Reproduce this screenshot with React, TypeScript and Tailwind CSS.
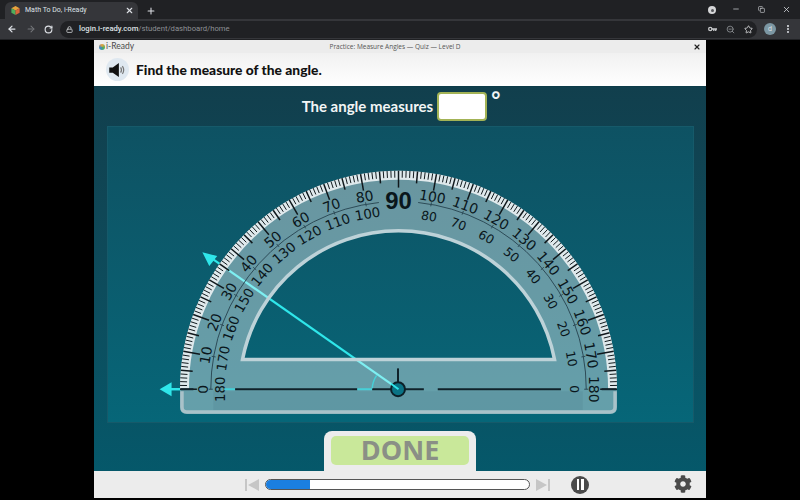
import React from 'react';
import { ArrowLeft, ArrowRight, RotateCw, Lock, ZoomOut, Star, EllipsisVertical, Plus, X, Minus, Copy } from 'lucide-react';
import { FaCog } from 'react-icons/fa';

const CX = 398.5;
const CY = 390;

const polar = (deg: number, r: number) => {
  const rad = (deg * Math.PI) / 180;
  return { x: CX - r * Math.cos(rad), y: CY - r * Math.sin(rad) };
};

const arcPath = (from: number, to: number, r: number) => {
  const a = polar(from, r);
  const b = polar(to, r);
  return `M${a.x} ${a.y}A${r} ${r} 0 0 1 ${b.x} ${b.y}`;
};

const Label: React.FC<{ deg: number; r: number; size: number; value: number }> = ({ deg, r, size, value }) => {
  const p = polar(deg, r);
  return (
    <text
      x={p.x}
      y={p.y}
      fontSize={size}
      fill="#0a161b"
      textAnchor="middle"
      dominantBaseline="central"
      transform={`rotate(${deg - 90} ${p.x} ${p.y})`}
    >
      {value}
    </text>
  );
};

const Protractor = () => {
  const degrees = Array.from({ length: 181 }, (_, i) => i);
  const tens = degrees.filter(d => d % 10 === 0);

  return (
    <svg viewBox="107 126 587 297" className="w-full h-full block font-['DejaVu_Sans',sans-serif]">
      {/* rays sit under the see-through body */}
      <line x1={CX} y1={CY} x2={208} y2={256.5} stroke="#2fe6ea" strokeWidth="2.2" />
      <line x1={179} y1={CY} x2={165} y2={CY} stroke="#2fe6ea" strokeWidth="2.5" />
      <polygon points="201,252 216,256 208,266" fill="#2fe6ea" />
      <polygon points="158,390 170,383 170,397" fill="#2fe6ea" />

      <path
        fillRule="evenodd"
        fill="#ffffff"
        fillOpacity="0.38"
        d={`M${CX - 220} ${CY}A220 220 0 0 1 ${CX + 220} ${CY}L${CX + 220} 408Q${CX + 220} 415 ${CX + 213} 415L${CX - 213} 415Q${CX - 220} 415 ${CX - 220} 408Z
            M${polar(11, 160).x} 360A160 160 0 0 1 ${polar(169, 160).x} 360Z`}
      />
      <rect x={212} y={392} width={372} height={19} fill="#3d6675" fillOpacity="0.12" />

      {/* light rims */}
      <path d={`M${polar(11, 160).x} 360A160 160 0 0 1 ${polar(169, 160).x} 360Z`} fill="none" stroke="#bdd2d8" strokeWidth="3.5" />
      <path d={`M${CX - 218} 392L${CX - 218} 408Q${CX - 218} 413 ${CX - 213} 413L${CX + 213} 413Q${CX + 218} 413 ${CX + 218} 408L${CX + 218} 392`} fill="none" stroke="#a9c2c9" strokeWidth="3.5" />
      <path d={arcPath(0, 180, 215.5)} fill="none" stroke="#dfe9ec" strokeWidth="9" />

      {/* outer ticks */}
      {degrees.map(d => {
        const len = d % 10 === 0 ? 17 : d % 5 === 0 ? 12 : 7;
        const a = polar(d, 220);
        const b = polar(d, 220 - len);
        return (
          <line
            key={d}
            x1={a.x}
            y1={a.y}
            x2={b.x}
            y2={b.y}
            stroke="#10181c"
            strokeWidth={d % 5 === 0 ? 1.5 : 1}
          />
        );
      })}

      {/* inner scale line */}
      <path d={arcPath(0, 84, 189)} fill="none" stroke="#2c4b57" strokeWidth="1" />
      <path d={arcPath(96, 180, 189)} fill="none" stroke="#2c4b57" strokeWidth="1" />
      {tens.filter(d => d !== 90).map(d => {
        const a = polar(d, 187);
        const b = polar(d, 191);
        return <line key={d} x1={a.x} y1={a.y} x2={b.x} y2={b.y} stroke="#2c4b57" strokeWidth="1" />;
      })}

      {tens.filter(d => d !== 90).map(d => (
        <Label key={`o${d}`} deg={d} r={197} size={14} value={d} />
      ))}
      {tens.filter(d => d !== 90).map(d => (
        <Label key={`i${d}`} deg={d} r={d < 90 ? 179 : 177} size={d < 90 ? 13.5 : 12.5} value={180 - d} />
      ))}
      <text x={CX} y={200} fontSize="24" fontWeight="700" fill="#0a161b" textAnchor="middle" dominantBaseline="central" className="font-['Liberation_Sans',sans-serif]">
        90
      </text>

      {/* baseline */}
      <line x1={223} y1={CY} x2={234} y2={CY} stroke="#46d0d8" strokeWidth="2" />
      <line x1={234} y1={CY} x2={357} y2={CY} stroke="#10222a" strokeWidth="2" />
      <line x1={357} y1={CY} x2={372} y2={CY} stroke="#46d0d8" strokeWidth="2" />
      <line x1={372} y1={CY} x2={424} y2={CY} stroke="#10222a" strokeWidth="2" />
      <line x1={438} y1={CY} x2={562} y2={CY} stroke="#10222a" strokeWidth="2" />
      <line x1={179} y1={CY} x2={192} y2={CY} stroke="#10222a" strokeWidth="2" />
      <line x1={603} y1={CY} x2={618} y2={CY} stroke="#10222a" strokeWidth="2" />
      <line x1={398} y1={CY} x2={398} y2={369} stroke="#10222a" strokeWidth="2" />
      <path d="M372 389A26 26 0 0 1 376.5 376" fill="none" stroke="#46d0d8" strokeWidth="1.5" />
      <circle cx={398} cy={CY} r={7} fill="#0a7385" stroke="#0c1f27" strokeWidth="2" />
      <line x1={CX} y1={CY} x2={391} y2={384.5} stroke="#2fe6ea" strokeWidth="2" />
    </svg>
  );
};

const BrowserChrome = () => (
  <div className="h-10 bg-[#202124] text-[#dee1e6] font-['Roboto',sans-serif] shrink-0">
    <div className="h-[19px] flex items-end pl-[5px]">
      <div className="w-[133px] h-[17px] bg-[#35363a] rounded-t-md flex items-center pl-[6px] pr-[4px] gap-[5px]">
        <svg viewBox="0 0 12 12" className="w-[9px] h-[9px] shrink-0">
          <polygon points="6,0 11.5,3 6,6 0.5,3" fill="#e8a33d" />
          <polygon points="0.5,3 6,6 6,12 0.5,9" fill="#4fae5c" />
          <polygon points="11.5,3 6,6 6,12 11.5,9" fill="#d9653b" />
        </svg>
        <span className="text-[7px] flex-1 whitespace-nowrap">Math To Do, i-Ready</span>
        <X className="w-[9px] h-[9px]" strokeWidth={3} />
      </div>
      <Plus className="w-[10px] h-[10px] ml-[8px] mb-[3px]" strokeWidth={2.5} />
      <div className="flex-1" />
      <div className="flex items-center self-start mt-[4px] mr-[9px]">
        <div className="w-[8px] h-[8px] rounded-full bg-[#d5d6d8] flex items-center justify-center mr-[16px] mt-[2px]">
          <div className="w-[3px] h-[3px] rounded-full bg-[#55565a]" />
        </div>
        <Minus className="w-[8px] h-[8px] mr-[18px]" />
        <Copy className="w-[7px] h-[7px] mr-[17px]" />
        <X className="w-[9px] h-[9px]" />
      </div>
    </div>
    <div className="h-[20px] bg-[#35363a] flex items-center pl-[7px]">
      <ArrowLeft className="w-[10px] h-[10px] mr-[9px]" strokeWidth={3} />
      <ArrowRight className="w-[10px] h-[10px] mr-[8px] text-[#75777b]" strokeWidth={2.5} />
      <RotateCw className="w-[9px] h-[9px] mr-[7px]" strokeWidth={3} />
      <div className="w-[697px] h-[17px] rounded-full bg-[#202124] flex items-center pl-[6px] pr-[4px]">
        <Lock className="w-[7px] h-[7px] mr-[6px] text-[#c0c2c5]" strokeWidth={3} />
        <span className="text-[7.7px] font-medium whitespace-nowrap">login.i-ready.com</span>
        <span className="text-[7.7px] text-[#8d9094] whitespace-nowrap">/student/dashboard/home</span>
        <div className="flex-1" />
        <svg viewBox="0 0 14 8" className="w-[9px] h-[6px] mr-[9px]">
          <circle cx="3.5" cy="4" r="2.5" fill="none" stroke="#c6c8ca" strokeWidth="2" />
          <path d="M6 3h8v2h-1v2h-2V5h-1v2H8V5H6z" fill="#c6c8ca" />
        </svg>
        <ZoomOut className="w-[9px] h-[9px] mr-[9px] text-[#9a9da1]" />
        <Star className="w-[9px] h-[9px] text-[#c6c8ca]" strokeWidth={2.5} />
      </div>
      <div className="w-[12px] h-[12px] rounded-full bg-[#7c97a3] text-[7px] flex items-center justify-center ml-[7px] mr-[7px]">d</div>
      <EllipsisVertical className="w-[10px] h-[10px]" strokeWidth={3} />
    </div>
  </div>
);

export default function App() {
  return (
    <div className="w-[800px] h-[500px] bg-black flex flex-col overflow-hidden font-['Lato',sans-serif]">
      <BrowserChrome />
      <div className="w-[612px] h-[458px] ml-[94px] flex flex-col">
        <div className="h-[13px] bg-[#ececec] flex items-center px-[5px] text-[6.5px] text-[#555] shrink-0">
          <span className="w-[6px] h-[6px] rounded-full bg-[conic-gradient(#e8a33d,#4fae5c,#3b87c9,#e8a33d)] mr-[1px]" />
          <span className="text-[8.5px] text-[#4a4a4a]">i-Ready</span>
          <span className="flex-1 text-center pr-[37px] font-['Open_Sans',sans-serif] whitespace-nowrap">Practice: Measure Angles — Quiz — Level D</span>
          <X className="w-[8px] h-[8px] text-[#222]" strokeWidth={3.5} />
        </div>
        <div className="h-[34px] bg-gradient-to-b from-[#f1f1f1] to-white flex items-center pl-[12px] gap-[7px] border-b border-[#0d3c49] shrink-0">
          <div className="w-[23px] h-[23px] rounded-full bg-[#dfe8f0] flex items-center justify-center">
            <svg viewBox="0 0 20 16" className="w-[18px] h-[14px]">
              <polygon points="0,5 4,5 11,0 11,16 4,11 0,11" fill="#111" />
              <path d="M13 5Q15 8 13 11M15 3.5Q18 8 15 12.5" fill="none" stroke="#777" strokeWidth="1.4" />
            </svg>
          </div>
          <span className="text-[13.8px] font-black text-[#111] mt-[1px]">Find the measure of the angle.</span>
        </div>
        <div className="flex-1 bg-gradient-to-b from-[#113f4d] to-[#05586a] flex flex-col items-center">
          <div className="h-[39px] flex items-center gap-[4px] pl-[2px] shrink-0">
            <span className="text-[15px] font-bold text-[#f2f5f5]">The angle measures</span>
            <div className="w-[50px] h-[29px] bg-white border-2 border-[#a3b356] rounded-[4px]" />
            <span className="text-[22px] leading-[22px] font-bold text-[#f2f5f5] self-start mt-[2px]">°</span>
          </div>
          <div className="w-[587px] h-[297px] bg-gradient-to-b from-[#0e5263] to-[#066678] border border-[#165a6a] shrink-0">
            <Protractor />
          </div>
          <div className="flex-1 flex items-end">
            <div className="w-[152px] h-[40px] bg-[#ececec] rounded-t-[8px] px-[7px] pt-[5px]">
              <div className="h-[29px] bg-[#c9e89a] rounded-[5px] flex items-center justify-center text-[27px] font-bold text-[#8a8f86] font-['Open_Sans',sans-serif]">
                DONE
              </div>
            </div>
          </div>
        </div>
        <div className="h-[27px] bg-[#ececec] flex items-center pl-[151px] shrink-0">
          <svg viewBox="0 0 14 14" className="w-[14px] h-[14px] mr-[6px]">
            <rect x="0" y="1" width="2" height="12" fill="#c6c6c6" />
            <polygon points="14,1 14,13 3,7" fill="#c6c6c6" />
          </svg>
          <div className="w-[265px] h-[11px] rounded-full bg-white border border-[#555] overflow-hidden">
            <div className="w-[44px] h-full bg-[#1b7fe0]" />
          </div>
          <svg viewBox="0 0 14 14" className="w-[14px] h-[14px] ml-[6px]">
            <polygon points="0,1 0,13 11,7" fill="#c6c6c6" />
            <rect x="12" y="1" width="2" height="12" fill="#c6c6c6" />
          </svg>
          <div className="w-[18px] h-[18px] rounded-full bg-[#4a4a4a] flex items-center justify-center gap-[2px] ml-[21px]">
            <span className="w-[2.5px] h-[11px] bg-white" />
            <span className="w-[2.5px] h-[11px] bg-white" />
          </div>
          <FaCog className="w-[18px] h-[18px] text-[#4a4a4a] ml-[85px] -mt-[1px]" />
        </div>
      </div>
    </div>
  );
}
